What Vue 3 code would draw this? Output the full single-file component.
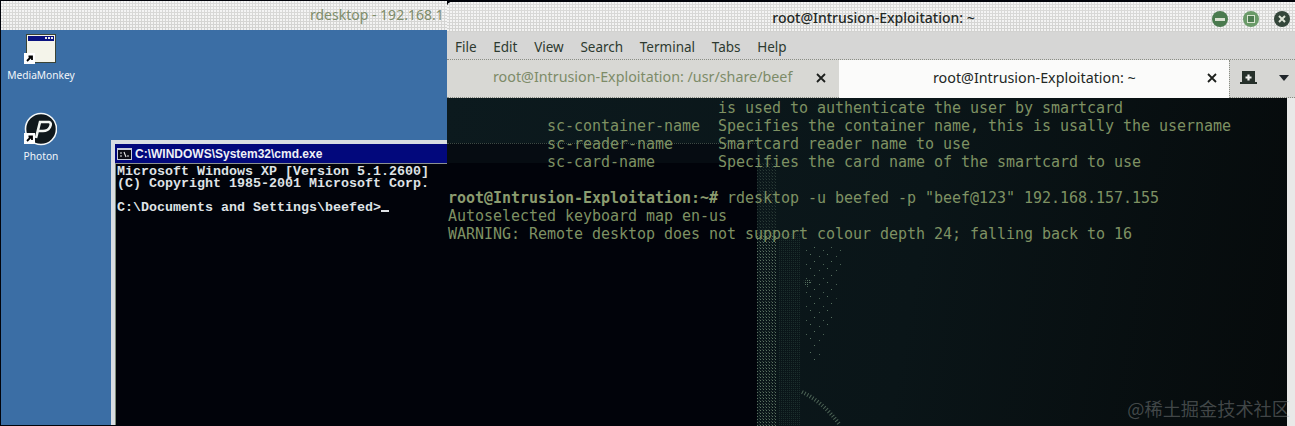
<script setup>
const menus = ['File', 'Edit', 'View', 'Search', 'Terminal', 'Tabs', 'Help']
const cmdLines = [
  'Microsoft Windows XP [Version 5.1.2600]',
  '(C) Copyright 1985-2001 Microsoft Corp.',
  '',
]
const termTop = [
  '                              is used to authenticate the user by smartcard',
  '           sc-container-name  Specifies the container name, this is usally the username',
  '           sc-reader-name     Smartcard reader name to use',
  '           sc-card-name       Specifies the card name of the smartcard to use',
  ' ',
]
const termBottom = [
  'Autoselected keyboard map en-us',
  'WARNING: Remote desktop does not support colour depth 24; falling back to 16',
]
</script>

<template>
  <div class="screen">
    <section class="rd-window">
      <header class="rd-title dither"><span>rdesktop - 192.168.1</span></header>
      <div class="xp-desktop">
        <div class="xp-icon mm">
          <svg width="34" height="32" viewBox="0 0 34 32">
            <rect x="3" y="1" width="30" height="29" fill="#3b4436" />
            <rect x="4" y="2" width="28" height="27" fill="#f4f4ea" />
            <rect x="5" y="3" width="26" height="5" fill="#0a1280" />
            <rect x="25" y="4" width="2" height="2" fill="#e8e8e8" />
            <rect x="28" y="4" width="2" height="2" fill="#e8e8e8" />
            <rect x="22" y="4" width="2" height="2" fill="#e8e8e8" />
            <rect x="1" y="20" width="11" height="11" fill="#fff" />
            <path d="M4 28 L8 24 M5.5 23.5 H9 V27" fill="none" stroke="#000" stroke-width="1.8" />
          </svg>
          <span>MediaMonkey</span>
        </div>
        <div class="xp-icon ph">
          <svg width="34" height="34" viewBox="0 0 34 34">
            <circle cx="18" cy="17" r="15.5" fill="#10181c" stroke="#f4f8fa" stroke-width="1.6" />
            <path d="M13 26 L17 10 H26 Q29 11 27 15 Q25 19 20 19 H15" fill="none" stroke="#f2f5f2" stroke-width="2.6" />
            <rect x="1" y="21" width="11" height="11" fill="#fff" />
            <path d="M4 29 L8 25 M5.5 24.5 H9 V28" fill="none" stroke="#000" stroke-width="1.8" />
          </svg>
          <span>Photon</span>
        </div>
        <div class="cmd-window">
          <div class="cmd-title">
            <svg width="15" height="12" viewBox="0 0 15 12">
              <rect width="15" height="12" fill="#c8ccd8" />
              <rect x="1" y="2" width="13" height="9" fill="#0c0c14" />
              <path d="M3 5 H5 M3 8 H5 M7 4 L9 9 M10 8 H12" stroke="#e6e6e6" stroke-width="1.1" fill="none" />
            </svg>
            <span>C:\WINDOWS\System32\cmd.exe</span>
          </div>
          <div class="cmd-body">
            <div v-for="(l, i) in cmdLines" :key="i" class="cmd-line">{{ l }}</div>
            <div class="cmd-line">C:\Documents and Settings\beefed&gt;<i class="caret"></i></div>
          </div>
        </div>
      </div>
    </section>

    <section class="term-window">
      <header class="term-title dither">
        <span>root@Intrusion-Exploitation: ~</span>
        <div class="wm-buttons">
          <i class="wm min"><b></b></i>
          <i class="wm max"><b></b></i>
          <i class="wm close">
            <svg width="10" height="10" viewBox="0 0 10 10"><path d="M2 2 L8 8 M8 2 L2 8" stroke="#dfe5d8" stroke-width="2" /></svg>
          </i>
        </div>
      </header>
      <nav class="term-menu">
        <span v-for="m in menus" :key="m">{{ m }}</span>
      </nav>
      <div class="term-tabs">
        <div class="tab inactive">
          <span class="tab-text">root@Intrusion-Exploitation: /usr/share/beef</span>
          <svg class="x" width="10" height="10" viewBox="0 0 10 10"><path d="M1 1 L9 9 M9 1 L1 9" stroke="#1c1f1c" stroke-width="1.8" /></svg>
        </div>
        <div class="tab active">
          <span class="tab-text">root@Intrusion-Exploitation: ~</span>
          <svg class="x" width="10" height="10" viewBox="0 0 10 10"><path d="M1 1 L9 9 M9 1 L1 9" stroke="#1c1f1c" stroke-width="1.8" /></svg>
        </div>
        <div class="tab-tools">
          <svg width="17" height="14" viewBox="0 0 17 14">
            <path d="M2 0 H15 V11 H17 V13 H0 V11 H2 Z" fill="#26302a" />
            <path d="M8.5 3.5 V9.5 M5.5 6.5 H11.5" stroke="#f2f2f0" stroke-width="2.2" />
          </svg>
          <svg width="10" height="6" viewBox="0 0 10 6"><path d="M0 0 H10 L5 6 Z" fill="#20262a" /></svg>
        </div>
      </div>
      <div class="term-body">
        <div class="through through-title"></div>
        <div class="through through-cmd"></div>
        <svg class="speckle" width="100" height="328" viewBox="0 0 100 328">
          <defs>
            <pattern id="sp" width="17" height="14" patternUnits="userSpaceOnUse">
              <rect x="2" y="2" width="1" height="1" fill="#56705f" />
              <rect x="11" y="4" width="1" height="1" fill="#4a6154" />
              <rect x="6" y="9" width="1" height="1" fill="#56705f" />
              <rect x="15" y="12" width="1" height="1" fill="#4a6154" />
            </pattern>
            <pattern id="col" width="3" height="3" patternUnits="userSpaceOnUse">
              <rect width="1" height="1" fill="#5c7462" />
              <rect x="2" y="2" width="1" height="1" fill="#34433c" />
            </pattern>
            <pattern id="col2" width="2" height="2" patternUnits="userSpaceOnUse">
              <rect width="1" height="1" fill="#1c2e2c" />
            </pattern>
            <pattern id="fine" width="2" height="2" patternUnits="userSpaceOnUse">
              <rect width="1" height="1" fill="#56705f" />
            </pattern>
          </defs>
          <rect x="0" y="136" width="20" height="192" fill="url(#col)" />
          <rect x="0" y="65" width="20" height="71" fill="url(#col)" opacity=".4" />
          <rect x="22" y="136" width="21" height="192" fill="url(#col2)" />
          <path d="M46 147 L86 150 L82 190 L74 225 L58 272 L48 240 L46 190 Z" fill="url(#sp)" />
          <path d="M46 183 L55 181 L50 190 Z" fill="url(#fine)" />
          <path d="M45 294 Q66 304 83 327" fill="none" stroke="#4d6456" stroke-width="4" stroke-dasharray="1 2" />
        </svg>
        <div class="term-text">
          <div v-for="(l, i) in termTop" :key="i">{{ l }}</div>
          <div><b>root@Intrusion-Exploitation:~#</b> rdesktop -u beefed -p "beef@123" 192.168.157.155</div>
          <div v-for="(l, i) in termBottom" :key="'b' + i">{{ l }}</div>
        </div>
        <div class="scrollbar"></div>
      </div>
    </section>

    <div class="watermark">@稀土掘金技术社区</div>
  </div>
</template>

<style>
html, body { margin: 0; background: #01030a; }
</style>

<style scoped>
.screen {
  position: relative;
  width: 1295px;
  height: 426px;
  overflow: hidden;
  background: #01030a;
  font-family: "Noto Sans", "Liberation Sans", sans-serif;
}
.dither {
  background-color: #d3d3d1;
  background-image:
    radial-gradient(circle at 1px 1px, rgba(255, 255, 255, .75) .7px, transparent .9px),
    linear-gradient(#dcdcdb, #d2d2d0);
  background-size: 3px 3px, 100% 100%;
}
.rd-window {
  position: absolute;
  left: 1px;
  top: 1px;
  width: 446px;
  height: 424px;
  display: flex;
  flex-direction: column;
}
.rd-title {
  height: 29px;
  flex: none;
  box-sizing: border-box;
  display: flex;
  align-items: center;
  padding: 0 0 3px 309px;
  overflow: hidden;
  white-space: nowrap;
  font-size: 14px;
  color: #7e8c6a;
}
.xp-desktop {
  position: relative;
  flex: 1;
  background: #3b6ea5;
  overflow: hidden;
}
.xp-icon {
  position: absolute;
  display: flex;
  flex-direction: column;
  align-items: center;
  width: 80px;
  color: #f2f6fa;
  font-size: 10.2px;
  line-height: 14px;
}
.xp-icon svg { display: block; margin-left: -3px; }
.mm { left: 0; top: 3px; }
.mm span { margin-top: 3px; }
.ph { left: 0; top: 82px; }
.ph span { margin-top: 3px; }
.cmd-window {
  position: absolute;
  left: 110px;
  top: 110px;
  width: 646px;
  bottom: 0;
  box-sizing: border-box;
  background: #d9dde2;
  padding: 4px 0 0 4px;
  display: flex;
  flex-direction: column;
}
.cmd-title {
  height: 19px;
  flex: none;
  background: #02087c;
  display: flex;
  align-items: center;
  gap: 3px;
  padding-left: 2px;
  color: #eef0f6;
  font-family: "Liberation Sans", sans-serif;
  font-weight: 700;
  font-size: 12px;
  white-space: nowrap;
}
.cmd-body {
  flex: 1;
  background: #01030a;
  border-top: 1px solid #8c9290;
  border-left: 1px solid #7d8a78;
  padding: 2px 0 0 1px;
  color: #dfe2e6;
  font-family: "Liberation Mono", monospace;
  font-weight: 700;
  font-size: 13.33px;
  line-height: 12px;
  white-space: pre;
}
.cmd-line { height: 12px; }
.caret {
  display: inline-block;
  width: 8px;
  height: 2px;
  background: #dfe2e6;
  vertical-align: -1px;
}
.term-window {
  position: absolute;
  left: 447px;
  top: 2px;
  width: 848px;
  height: 424px;
  display: flex;
  flex-direction: column;
  border-top-left-radius: 5px;
  overflow: hidden;
}
.term-title {
  height: 30px;
  flex: none;
  position: relative;
  display: flex;
  align-items: center;
  justify-content: center;
  box-sizing: border-box;
  padding-left: 5px;
  font-size: 14px;
  font-weight: 500;
  color: #232825;
}
.wm-buttons {
  position: absolute;
  right: 5px;
  top: 9px;
  display: flex;
  gap: 15px;
}
.wm {
  width: 16px;
  height: 16px;
  border-radius: 50%;
  display: flex;
  align-items: center;
  justify-content: center;
}
.wm.min { background: #4a7a4e; }
.wm.min b { width: 10px; height: 3px; background: #d8e0d0; }
.wm.max { background: #6a9a68; }
.wm.max b { width: 8px; height: 8px; background: #4f7d52; border: 1px solid #d8e4d0; box-sizing: border-box; }
.wm.close { background: #34463a; }
.term-menu {
  height: 28px;
  flex: none;
  box-sizing: border-box;
  background: #d6d6d5;
  display: flex;
  align-items: center;
  gap: 16.7px;
  padding: 2px 0 0 8px;
  font-size: 13.5px;
  color: #2d3a30;
  border-bottom: 1px dotted #8a8d84;
}
.term-tabs {
  height: 38px;
  flex: none;
  display: flex;
  background: #d6d6d3;
}
.tab {
  position: relative;
  display: flex;
  align-items: center;
  padding-bottom: 4px;
  font-size: 14.3px;
}
.tab .x { position: absolute; top: 13px; }
.inactive {
  width: 392px;
  background: #d8d8d4;
  color: #7d8b68;
  padding-left: 46px;
  box-sizing: border-box;
  border-bottom: 1px dotted #8a8d84;
}
.inactive .x { right: 13px; }
.active {
  width: 390px;
  background: #fbfbfa;
  color: #232825;
  padding-left: 94px;
  box-sizing: border-box;
}
.active .x { right: 12px; }
.tab-tools {
  flex: 1;
  display: flex;
  align-items: center;
  justify-content: space-between;
  padding: 0 6px 2px 10px;
  border-left: 1px dotted #8a8d84;
  border-bottom: 1px dotted #8a8d84;
}
.term-body {
  position: relative;
  flex: 1;
  background: linear-gradient(100deg, #0c1a1e, #0a1518 55%, #060a0b);
  overflow: hidden;
}
.through { position: absolute; left: 0; width: 310px; }
.through-title { top: 45px; height: 20px; background: #060c12; border-top: 1px dotted #3c4a44; box-sizing: border-box; }
.through-cmd { top: 65px; bottom: 0; background: #01030a; }
.speckle { position: absolute; left: 310px; top: 0; }
.term-text {
  position: relative;
  padding: 1px 0 0 1px;
  font-family: "DejaVu Sans Mono", monospace;
  font-size: 15px;
  letter-spacing: -.03px;
  line-height: 18px;
  white-space: pre;
  color: #7e9163;
}
.term-text b { color: #8b9c6f; }
.term-text div { height: 18px; }
.scrollbar {
  position: absolute;
  right: 0;
  top: 0;
  bottom: 0;
  width: 8px;
  background: #e9e9e8;
}
.watermark {
  position: absolute;
  right: 5px;
  bottom: 8px;
  font-family: "Noto Sans CJK SC", sans-serif;
  font-size: 18.2px;
  line-height: 20px;
  color: rgba(150, 155, 155, .42);
  white-space: nowrap;
}
</style>
